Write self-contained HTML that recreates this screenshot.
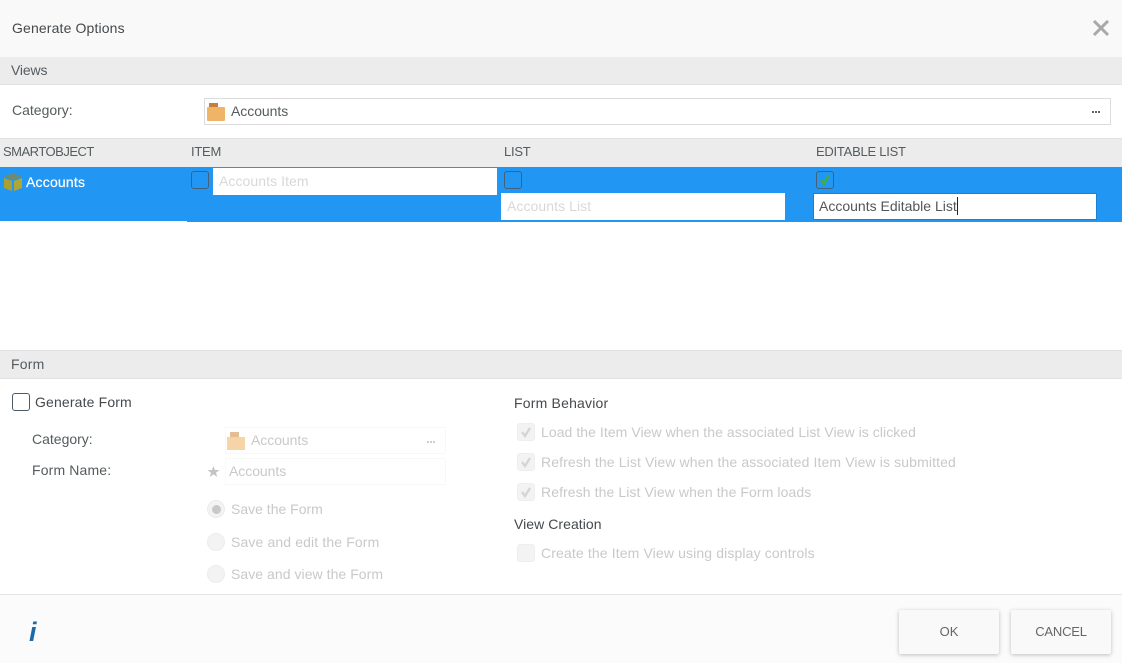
<!DOCTYPE html>
<html><head><meta charset="utf-8">
<style>
html,body{margin:0;padding:0;background:#fff}
#p{position:relative;width:1122px;height:663px;overflow:hidden;background:#fff;font-family:"Liberation Sans",sans-serif;font-size:14px;color:#555b5e}
#p div,#p svg{position:absolute}
.t{white-space:nowrap;line-height:18px;height:18px}
.h{font-size:13px}
.g{color:#c9c9c9}
.d{color:#45494c}
.bar{left:0;width:1122px;background:#ececec}
.cb{box-sizing:border-box;width:18px;height:18px;border:1.5px solid #45607a;border-radius:3px}
.dcb{box-sizing:border-box;width:18px;height:18px;background:#f3f3f3;border:1px solid #eeeeee;border-radius:3px}
.rad{box-sizing:border-box;width:18px;height:18px;border-radius:50%;background:#f3f3f3;border:1px solid #ececec}
.inp{background:#fff}
.btn{box-sizing:border-box;background:#f9f9f9;border-radius:2px;box-shadow:0 1px 4px rgba(0,0,0,.25);text-align:center;line-height:44px;height:44px;font-size:13px;color:#666}
</style></head><body>
<div id="p">
<div style="left:0;top:0;width:1122px;height:57px;background:#f9f9f9"></div>
<div class="t d" style="left:12px;top:19px;letter-spacing:.14px">Generate Options</div>
<svg style="left:1092px;top:20px" width="18" height="18" viewBox="0 0 18 18"><path d="M2 1L16 15M16 1L2 15" stroke="#a9a9a9" stroke-width="3" fill="none"/></svg>

<div class="bar" style="top:57px;height:27px;border-bottom:1px solid #e2e2e2"></div>
<div class="t" style="left:11px;top:61px;letter-spacing:-.15px">Views</div>

<div class="t" style="left:12px;top:101px">Category:</div>
<div style="left:204px;top:98px;width:905px;height:25px;border:1px solid #dcdcdc;background:#fff"></div>
<svg style="left:207px;top:102px" width="18" height="19" viewBox="0 0 18 19"><rect x="2" y="1" width="9" height="4" fill="#c47f38"/><rect x="0" y="5" width="18" height="14" rx="1" fill="#f0b468"/></svg>
<div class="t" style="left:231px;top:102px;letter-spacing:-.05px">Accounts</div>
<div style="left:1092px;top:111px;width:2px;height:2px;background:#666;box-shadow:3px 0 0 #666,6px 0 0 #666"></div>

<div class="bar" style="top:138px;height:29px;border-top:1px solid #e2e2e2;box-sizing:border-box"></div>
<div class="t h" style="left:3px;top:143px;letter-spacing:-.5px">SMARTOBJECT</div>
<div class="t h" style="left:191px;top:143px;letter-spacing:-.25px">ITEM</div>
<div class="t h" style="left:504px;top:143px;letter-spacing:-.25px">LIST</div>
<div class="t h" style="left:816px;top:143px;letter-spacing:-.25px">EDITABLE LIST</div>

<div style="left:0;top:167px;width:1122px;height:55px;background:#2196f3"></div>
<div style="left:0;top:221px;width:187px;height:1px;background:#fff"></div>
<svg style="left:4px;top:173px" width="18" height="18" viewBox="0 0 18 18"><path d="M0 4L9 0L18 4L9 7Z" fill="#6f8a70"/><path d="M0 5L8 8V18L0 15Z" fill="#a8a030"/><path d="M18 5L10 8V18L18 15Z" fill="#b0a636"/></svg>
<div class="t" style="left:26px;top:173px;color:#fff;letter-spacing:.2px;-webkit-text-stroke:.2px #fff">Accounts</div>

<div class="cb" style="left:191px;top:171px"></div>
<div class="inp" style="left:213px;top:168px;width:284px;height:27px"></div>
<div class="t" style="left:219px;top:172px;color:#d8d8d8;letter-spacing:.07px">Accounts Item</div>

<div class="cb" style="left:504px;top:171px"></div>
<div class="inp" style="left:501px;top:193px;width:284px;height:27px"></div>
<div class="t" style="left:507px;top:197px;color:#d8d8d8;letter-spacing:.07px">Accounts List</div>

<div class="cb" style="left:816px;top:171px"></div>
<svg style="left:818px;top:173px" width="14" height="14" viewBox="0 0 14 14"><path d="M3 7L6 11L11 2" stroke="#3fae49" stroke-width="2.6" fill="none"/></svg>
<div class="inp" style="left:813px;top:193px;width:284px;height:27px;box-sizing:border-box;border:1px solid #1f7fd0"></div>
<div class="t" style="left:819px;top:197px;color:#50565a">Accounts Editable List</div>
<div style="left:957px;top:197px;width:1px;height:18px;background:#222"></div>

<div class="bar" style="top:350px;height:29px;border-top:1px solid #e2e2e2;border-bottom:1px solid #e2e2e2;box-sizing:border-box"></div>
<div class="t" style="left:11px;top:355px;letter-spacing:.2px">Form</div>

<div class="cb" style="left:12px;top:393px;border-color:#4d5b66"></div>
<div class="t d" style="left:35px;top:393px;letter-spacing:.15px">Generate Form</div>
<div class="t" style="left:32px;top:430px">Category:</div>
<div class="t" style="left:32px;top:461px;letter-spacing:.15px">Form Name:</div>

<div style="left:225px;top:427px;width:219px;height:25px;border:1px solid #f7f9f7"></div>
<svg style="left:227px;top:431px" width="18" height="19" viewBox="0 0 18 19"><rect x="3" y="1" width="9" height="5" fill="#e3bd94"/><rect x="0" y="6" width="18" height="13" fill="#f7d4a8"/></svg>
<div class="t g" style="left:251px;top:431px;letter-spacing:-.05px">Accounts</div>
<div style="left:427px;top:441px;width:2px;height:2px;background:#cfcfcf;box-shadow:3px 0 0 #cfcfcf,6px 0 0 #cfcfcf"></div>

<div style="left:225px;top:458px;width:219px;height:25px;border:1px solid #f7f9f7"></div>
<svg style="left:207px;top:465px" width="13" height="13" viewBox="0 0 13 13"><path d="M6.5 1L8 5H12.5L9 7.7L10.3 12L6.5 9.4L2.7 12L4 7.7L.5 5H5Z" fill="#c4c4c4"/></svg>
<div class="t g" style="left:229px;top:462px;letter-spacing:-.05px">Accounts</div>

<div class="rad" style="left:207px;top:500px"></div>
<div style="left:212px;top:505px;width:9px;height:9px;border-radius:50%;background:#c8c8c8"></div>
<div class="t g" style="left:231px;top:500px">Save the Form</div>
<div class="rad" style="left:207px;top:533px"></div>
<div class="t g" style="left:231px;top:533px;letter-spacing:.13px">Save and edit the Form</div>
<div class="rad" style="left:207px;top:565px"></div>
<div class="t g" style="left:231px;top:565px;letter-spacing:.05px">Save and view the Form</div>

<div class="t d" style="left:514px;top:394px;letter-spacing:.2px">Form Behavior</div>
<div class="dcb" style="left:517px;top:423px"></div>
<svg style="left:519px;top:425px" width="14" height="14" viewBox="0 0 14 14"><path d="M3 7L6 11L11 3" stroke="#d5d5d5" stroke-width="2.4" fill="none"/></svg>
<div class="t g" style="left:541px;top:423px;letter-spacing:.06px">Load the Item View when the associated List View is clicked</div>
<div class="dcb" style="left:517px;top:453px"></div>
<svg style="left:519px;top:455px" width="14" height="14" viewBox="0 0 14 14"><path d="M3 7L6 11L11 3" stroke="#d5d5d5" stroke-width="2.4" fill="none"/></svg>
<div class="t g" style="left:541px;top:453px;letter-spacing:.12px">Refresh the List View when the associated Item View is submitted</div>
<div class="dcb" style="left:517px;top:483px"></div>
<svg style="left:519px;top:485px" width="14" height="14" viewBox="0 0 14 14"><path d="M3 7L6 11L11 3" stroke="#d5d5d5" stroke-width="2.4" fill="none"/></svg>
<div class="t g" style="left:541px;top:483px;letter-spacing:.09px">Refresh the List View when the Form loads</div>
<div class="t d" style="left:514px;top:515px;letter-spacing:.05px">View Creation</div>
<div class="dcb" style="left:517px;top:544px"></div>
<div class="t g" style="left:541px;top:544px;letter-spacing:.13px">Create the Item View using display controls</div>

<div style="left:0;top:594px;width:1122px;height:69px;background:#fbfbfb;border-top:1px solid #e6e6e6;box-sizing:border-box"></div>
<div style="left:29px;top:619px;font-size:27px;font-weight:bold;font-style:italic;line-height:26px;color:#1c6ba8">i</div>
<div class="btn" style="left:899px;top:610px;width:100px">OK</div>
<div class="btn" style="left:1011px;top:610px;width:100px;letter-spacing:-.2px">CANCEL</div>
</div>
</body></html>
